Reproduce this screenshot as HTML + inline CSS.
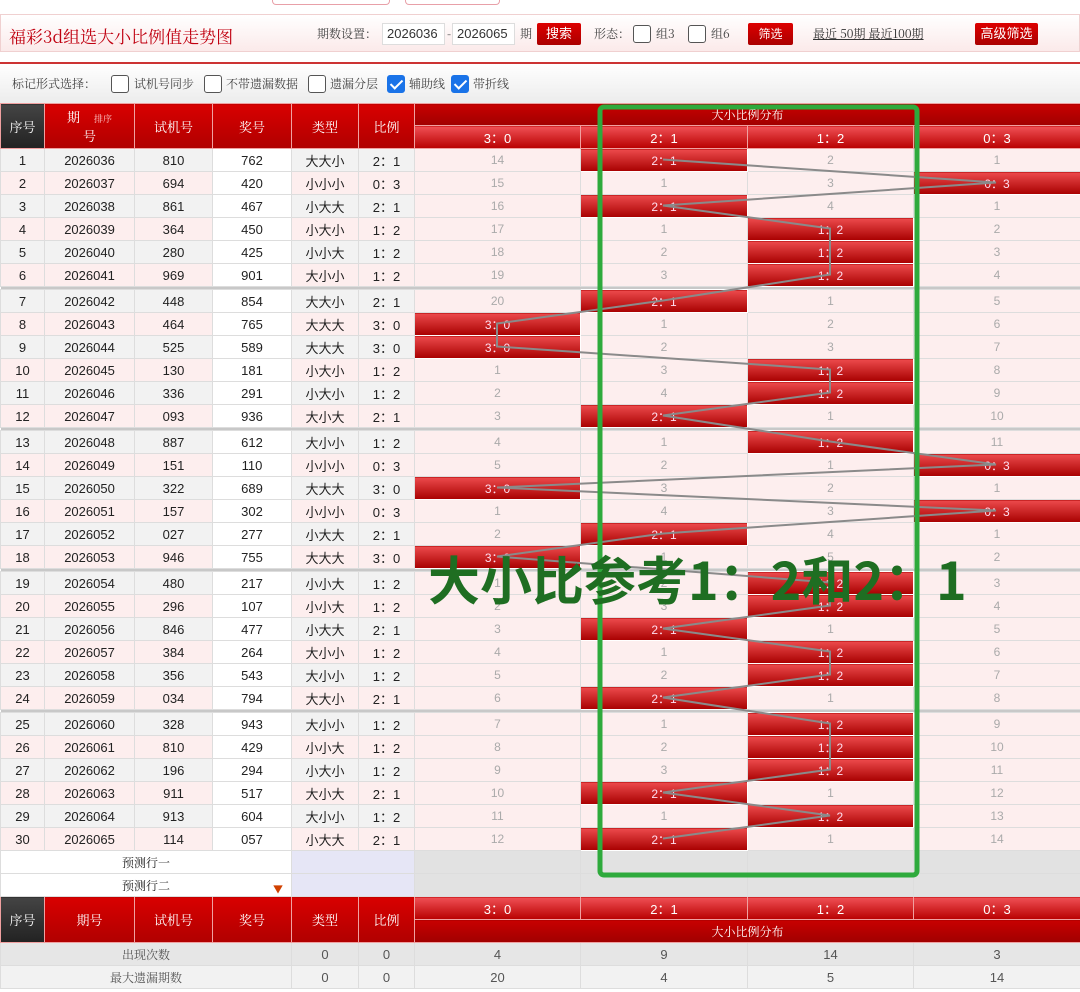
<!DOCTYPE html>
<html><head><meta charset="utf-8">
<style>
*{margin:0;padding:0;box-sizing:border-box}
body{width:1080px;height:992px;overflow:hidden;background:#fff;font-family:"Liberation Sans","Noto Sans CJK SC",sans-serif;position:relative;font-size:13px;color:#222}
.tab{position:absolute;top:0;height:5px;border:1px solid #e8a0a8;border-top:none;border-radius:0 0 4px 4px;background:#fff}
.top{position:absolute;left:0;top:14px;width:1080px;height:38px;background:linear-gradient(#fff,#fbeaea);border:1px solid #f0d0d0}
.title{position:absolute;left:8px;top:8px;font-size:17px;color:#c00010;font-family:"Noto Serif CJK SC",serif}
.t{position:absolute;font-size:12px;color:#444;font-family:"Noto Serif CJK SC",serif}
.inp{position:absolute;top:8px;height:22px;border:1px solid #ddd;background:#fff;font-size:13px;padding:2px 4px;color:#333}
.btn{position:absolute;top:8px;height:22px;background:linear-gradient(#d00,#a00);color:#fff;font-size:13px;text-align:center;line-height:22px;border-radius:2px}
.cb{position:absolute;width:18px;height:18px;border:1px solid #555;border-radius:3px;background:#fff}
.cb.on{background:#1a73e8;border-color:#1a73e8}
.cb.on:after{content:"";position:absolute;left:5px;top:1px;width:5px;height:10px;border:solid #fff;border-width:0 2px 2px 0;transform:rotate(45deg)}
.rl{position:absolute;left:0;top:62px;width:1080px;height:2px;background:#c33}
.bar2{position:absolute;left:0;top:64px;width:1080px;height:39px;background:linear-gradient(#fff,#ececec)}
table{position:absolute;left:0;border-collapse:collapse;table-layout:fixed;width:1080px}
td{border:1px solid #ddd;text-align:center;height:23px;font-size:13px;padding:0;white-space:nowrap;overflow:hidden}
tr.o td{background:#f2f2f2}
tr.e td{background:#fdeeee}
tr.o td:nth-child(4),tr.e td:nth-child(4){background:#fff}
tr.o td:nth-child(n+7),tr.e td:nth-child(n+7){background:#fdeeee;color:#aaa;font-size:12px}
tr.o td.h,tr.e td.h{background:linear-gradient(#ec4a4c,#a80000);color:#fde;border-color:#fff}
tr.s td{height:3px;background:#c8c8c8;border:none}
.hd td{background:linear-gradient(#d80000,#b00000);color:#fff;border-color:#f0a0a0;font-family:"Noto Serif CJK SC",serif;font-size:13px}
.hd td.dk{background:linear-gradient(#444,#222)}
.hd td.sub{background:linear-gradient(#f05055,#b80000);font-family:"Liberation Sans",sans-serif}
.hd td.top2{background:linear-gradient(#c80000,#a00000);font-size:12px}
.pr td{height:23px;background:#fff;font-family:"Noto Serif CJK SC",serif;font-size:12px}
.st td{height:23px;color:#555}
</style></head><body>
<div class="tab" style="left:272px;width:118px"></div>
<div class="tab" style="left:405px;width:95px"></div>
<div class="top">
<div class="title">福彩3d组选大小比例值走势图</div>
<div class="t" style="left:316px;top:10px">期数设置：</div>
<div class="inp" style="left:381px;width:63px">2026036</div>
<div class="t" style="left:446px;top:10px">-</div>
<div class="inp" style="left:451px;width:63px">2026065</div>
<div class="t" style="left:519px;top:10px">期</div>
<div class="btn" style="left:536px;width:44px">搜索</div>
<div class="t" style="left:593px;top:10px">形态：</div>
<div class="cb" style="left:632px;top:10px"></div><div class="t" style="left:655px;top:10px">组3</div>
<div class="cb" style="left:687px;top:10px"></div><div class="t" style="left:710px;top:10px">组6</div>
<div class="btn" style="left:747px;width:45px;font-size:12px">筛选</div>
<div class="t" style="left:812px;top:10px;text-decoration:underline;color:#333">最近 50期 最近100期</div>
<div class="btn" style="left:974px;width:63px">高级筛选</div>
</div>
<div class="rl"></div>
<div class="bar2">
<div class="t" style="left:12px;top:11px">标记形式选择：</div>
<div class="cb" style="left:111px;top:11px"></div><div class="t" style="left:134px;top:11px">试机号同步</div>
<div class="cb" style="left:204px;top:11px"></div><div class="t" style="left:226px;top:11px">不带遗漏数据</div>
<div class="cb" style="left:308px;top:11px"></div><div class="t" style="left:330px;top:11px">遗漏分层</div>
<div class="cb on" style="left:387px;top:11px"></div><div class="t" style="left:409px;top:11px">辅助线</div>
<div class="cb on" style="left:451px;top:11px"></div><div class="t" style="left:473px;top:11px">带折线</div>
</div>

<table style="top:103px">
<colgroup><col width="44"><col width="90"><col width="78"><col width="79"><col width="67"><col width="56"><col width="166"><col width="167"><col width="166"><col width="167"></colgroup>
<tr class="hd"><td rowspan="2" class="dk" style="height:45px">序号</td><td rowspan="2">期<span style="font-size:9px;color:#fcc;margin-left:14px">排序</span><br>号</td><td rowspan="2">试机号</td><td rowspan="2">奖号</td><td rowspan="2">类型</td><td rowspan="2">比例</td><td colspan="4" class="top2" style="height:22px">大小比例分布</td></tr>
<tr class="hd"><td class="sub" style="height:23px">3：0</td><td class="sub">2：1</td><td class="sub">1：2</td><td class="sub">0：3</td></tr>
<tr class="o"><td>1</td><td>2026036</td><td>810</td><td>762</td><td>大大小</td><td>2：1</td><td>14</td><td class="h">2：1</td><td>2</td><td>1</td></tr>
<tr class="e"><td>2</td><td>2026037</td><td>694</td><td>420</td><td>小小小</td><td>0：3</td><td>15</td><td>1</td><td>3</td><td class="h">0：3</td></tr>
<tr class="o"><td>3</td><td>2026038</td><td>861</td><td>467</td><td>小大大</td><td>2：1</td><td>16</td><td class="h">2：1</td><td>4</td><td>1</td></tr>
<tr class="e"><td>4</td><td>2026039</td><td>364</td><td>450</td><td>小大小</td><td>1：2</td><td>17</td><td>1</td><td class="h">1：2</td><td>2</td></tr>
<tr class="o"><td>5</td><td>2026040</td><td>280</td><td>425</td><td>小小大</td><td>1：2</td><td>18</td><td>2</td><td class="h">1：2</td><td>3</td></tr>
<tr class="e"><td>6</td><td>2026041</td><td>969</td><td>901</td><td>大小小</td><td>1：2</td><td>19</td><td>3</td><td class="h">1：2</td><td>4</td></tr>
<tr class="s"><td colspan="10"></td></tr>
<tr class="o"><td>7</td><td>2026042</td><td>448</td><td>854</td><td>大大小</td><td>2：1</td><td>20</td><td class="h">2：1</td><td>1</td><td>5</td></tr>
<tr class="e"><td>8</td><td>2026043</td><td>464</td><td>765</td><td>大大大</td><td>3：0</td><td class="h">3：0</td><td>1</td><td>2</td><td>6</td></tr>
<tr class="o"><td>9</td><td>2026044</td><td>525</td><td>589</td><td>大大大</td><td>3：0</td><td class="h">3：0</td><td>2</td><td>3</td><td>7</td></tr>
<tr class="e"><td>10</td><td>2026045</td><td>130</td><td>181</td><td>小大小</td><td>1：2</td><td>1</td><td>3</td><td class="h">1：2</td><td>8</td></tr>
<tr class="o"><td>11</td><td>2026046</td><td>336</td><td>291</td><td>小大小</td><td>1：2</td><td>2</td><td>4</td><td class="h">1：2</td><td>9</td></tr>
<tr class="e"><td>12</td><td>2026047</td><td>093</td><td>936</td><td>大小大</td><td>2：1</td><td>3</td><td class="h">2：1</td><td>1</td><td>10</td></tr>
<tr class="s"><td colspan="10"></td></tr>
<tr class="o"><td>13</td><td>2026048</td><td>887</td><td>612</td><td>大小小</td><td>1：2</td><td>4</td><td>1</td><td class="h">1：2</td><td>11</td></tr>
<tr class="e"><td>14</td><td>2026049</td><td>151</td><td>110</td><td>小小小</td><td>0：3</td><td>5</td><td>2</td><td>1</td><td class="h">0：3</td></tr>
<tr class="o"><td>15</td><td>2026050</td><td>322</td><td>689</td><td>大大大</td><td>3：0</td><td class="h">3：0</td><td>3</td><td>2</td><td>1</td></tr>
<tr class="e"><td>16</td><td>2026051</td><td>157</td><td>302</td><td>小小小</td><td>0：3</td><td>1</td><td>4</td><td>3</td><td class="h">0：3</td></tr>
<tr class="o"><td>17</td><td>2026052</td><td>027</td><td>277</td><td>小大大</td><td>2：1</td><td>2</td><td class="h">2：1</td><td>4</td><td>1</td></tr>
<tr class="e"><td>18</td><td>2026053</td><td>946</td><td>755</td><td>大大大</td><td>3：0</td><td class="h">3：0</td><td>1</td><td>5</td><td>2</td></tr>
<tr class="s"><td colspan="10"></td></tr>
<tr class="o"><td>19</td><td>2026054</td><td>480</td><td>217</td><td>小小大</td><td>1：2</td><td>1</td><td>2</td><td class="h">1：2</td><td>3</td></tr>
<tr class="e"><td>20</td><td>2026055</td><td>296</td><td>107</td><td>小小大</td><td>1：2</td><td>2</td><td>3</td><td class="h">1：2</td><td>4</td></tr>
<tr class="o"><td>21</td><td>2026056</td><td>846</td><td>477</td><td>小大大</td><td>2：1</td><td>3</td><td class="h">2：1</td><td>1</td><td>5</td></tr>
<tr class="e"><td>22</td><td>2026057</td><td>384</td><td>264</td><td>大小小</td><td>1：2</td><td>4</td><td>1</td><td class="h">1：2</td><td>6</td></tr>
<tr class="o"><td>23</td><td>2026058</td><td>356</td><td>543</td><td>大小小</td><td>1：2</td><td>5</td><td>2</td><td class="h">1：2</td><td>7</td></tr>
<tr class="e"><td>24</td><td>2026059</td><td>034</td><td>794</td><td>大大小</td><td>2：1</td><td>6</td><td class="h">2：1</td><td>1</td><td>8</td></tr>
<tr class="s"><td colspan="10"></td></tr>
<tr class="o"><td>25</td><td>2026060</td><td>328</td><td>943</td><td>大小小</td><td>1：2</td><td>7</td><td>1</td><td class="h">1：2</td><td>9</td></tr>
<tr class="e"><td>26</td><td>2026061</td><td>810</td><td>429</td><td>小小大</td><td>1：2</td><td>8</td><td>2</td><td class="h">1：2</td><td>10</td></tr>
<tr class="o"><td>27</td><td>2026062</td><td>196</td><td>294</td><td>小大小</td><td>1：2</td><td>9</td><td>3</td><td class="h">1：2</td><td>11</td></tr>
<tr class="e"><td>28</td><td>2026063</td><td>911</td><td>517</td><td>大小大</td><td>2：1</td><td>10</td><td class="h">2：1</td><td>1</td><td>12</td></tr>
<tr class="o"><td>29</td><td>2026064</td><td>913</td><td>604</td><td>大小小</td><td>1：2</td><td>11</td><td>1</td><td class="h">1：2</td><td>13</td></tr>
<tr class="e"><td>30</td><td>2026065</td><td>114</td><td>057</td><td>小大大</td><td>2：1</td><td>12</td><td class="h">2：1</td><td>1</td><td>14</td></tr>
<tr class="pr"><td colspan="4">预测行一</td><td colspan="2" style="background:#e6e6f6"></td><td style="background:#e2e2e2"></td><td style="background:#e2e2e2"></td><td style="background:#e2e2e2"></td><td style="background:#e2e2e2"></td></tr>
<tr class="pr"><td colspan="4" style="position:relative">预测行二<span style="position:absolute;right:8px;bottom:0;color:#d04000;font-size:10px">▼</span></td><td colspan="2" style="background:#e6e6f6"></td><td style="background:#e2e2e2"></td><td style="background:#e2e2e2"></td><td style="background:#e2e2e2"></td><td style="background:#e2e2e2"></td></tr>
<tr class="hd"><td rowspan="2" class="dk" style="height:46px">序号</td><td rowspan="2">期号</td><td rowspan="2">试机号</td><td rowspan="2">奖号</td><td rowspan="2">类型</td><td rowspan="2">比例</td><td class="sub" style="height:23px">3：0</td><td class="sub">2：1</td><td class="sub">1：2</td><td class="sub">0：3</td></tr>
<tr class="hd"><td colspan="4" class="top2" style="height:23px">大小比例分布</td></tr>
<tr class="st"><td colspan="4" style="background:#e6e6e6;font-family:'Noto Serif CJK SC',serif;font-size:12px">出现次数</td><td style="background:#e6e6e6">0</td><td style="background:#e6e6e6">0</td><td style="background:#e6e6e6">4</td><td style="background:#e6e6e6">9</td><td style="background:#e6e6e6">14</td><td style="background:#e6e6e6">3</td></tr>
<tr class="st"><td colspan="4" style="background:#f2f2f2;font-family:'Noto Serif CJK SC',serif;font-size:12px">最大遗漏期数</td><td style="background:#f2f2f2">0</td><td style="background:#f2f2f2">0</td><td style="background:#f2f2f2">20</td><td style="background:#f2f2f2">4</td><td style="background:#f2f2f2">5</td><td style="background:#f2f2f2">14</td></tr>
</table>

<svg style="position:absolute;left:0;top:0" width="1080" height="992">
<polyline fill="none" stroke="#8a8a8a" stroke-width="2" points="663,159.5 996,182.5 663,205.5 830,228.5 830,251.5 830,274.5 663,300.5 497,323.5 497,346.5 830,369.5 830,392.5 663,415.5 830,441.5 996,464.5 497,487.5 996,510.5 663,533.5 497,556.5 830,582.5 830,605.5 663,628.5 830,651.5 830,674.5 663,697.5 830,723.5 830,746.5 830,769.5 663,792.5 830,815.5 663,838.5"/>
<rect x="600" y="107" width="317" height="768" rx="4" fill="none" stroke="#2eaa3c" stroke-width="5"/>
<text x="428" y="600" font-family="'WenQuanYi Zen Hei','Noto Sans CJK SC',sans-serif" font-size="52" font-weight="bold" fill="#1f6e22">大小比参考1：2和2：1</text>
</svg>
</body></html>
